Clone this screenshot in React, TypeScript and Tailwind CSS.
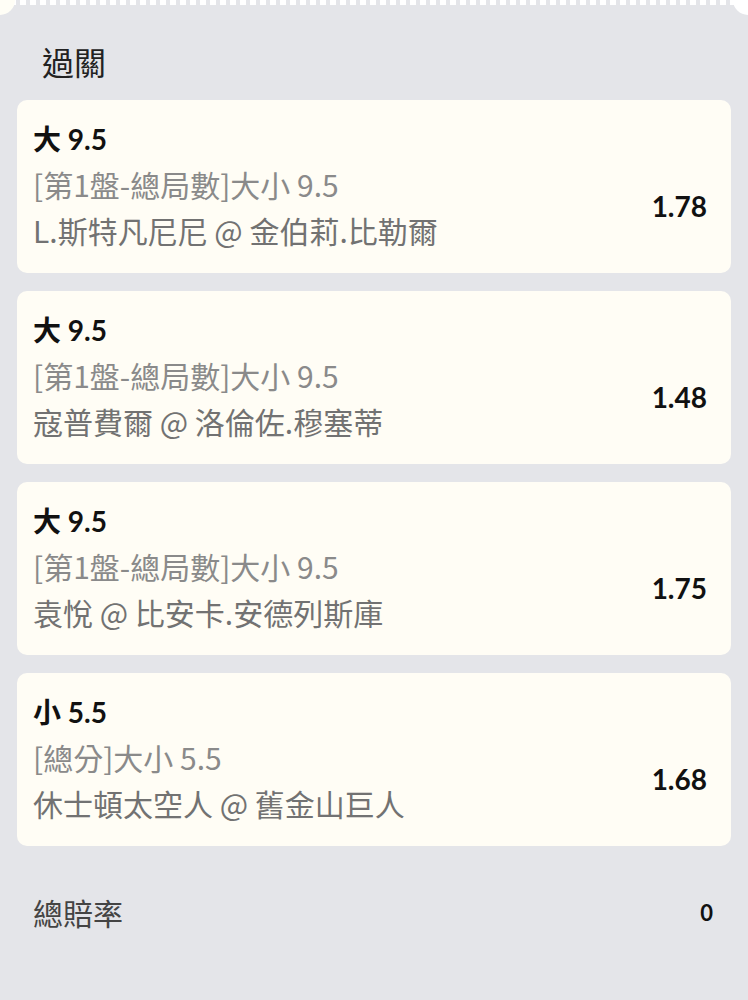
import React from 'react';

type Bet = { pick: string; market: string; match: string; odds: string };

const bets: Bet[] = [
  { pick: '大 9.5', market: '[第1盤-總局數]大小 9.5', match: 'L.斯特凡尼尼 @ 金伯莉.比勒爾', odds: '1.78' },
  { pick: '大 9.5', market: '[第1盤-總局數]大小 9.5', match: '寇普費爾 @ 洛倫佐.穆塞蒂', odds: '1.48' },
  { pick: '大 9.5', market: '[第1盤-總局數]大小 9.5', match: '袁悅 @ 比安卡.安德列斯庫', odds: '1.75' },
  { pick: '小 5.5', market: '[總分]大小 5.5', match: '休士頓太空人 @ 舊金山巨人', odds: '1.68' },
];

const latin = "font-['Lato','Noto_Sans_CJK_TC',sans-serif]";
const cjk = "font-['Noto_Sans_CJK_TC',sans-serif]";

function BetCard({ bet }: { bet: Bet }) {
  return (
    <div className="flex items-center justify-between rounded-[10px] bg-[#fffdf5] pl-4 pr-6 pt-[17px] pb-[20px]">
      <div className="flex flex-col">
        <p className={`${latin} text-[28px] leading-[44px] font-bold text-[#111]`}>{bet.pick}</p>
        <p className={`${cjk} text-[30px] leading-[46px] text-[#8a8a8a]`}>{bet.market}</p>
        <p className={`${cjk} text-[30px] leading-[46px] text-[#727272]`}>{bet.match}</p>
      </div>
      {/* odds sit level with the lower two lines */}
      <span className={`${latin} mt-[41px] text-[28px] font-bold text-[#111]`}>{bet.odds}</span>
    </div>
  );
}

export default function App() {
  return (
    <div className={`relative h-[1000px] w-[748px] overflow-hidden bg-[#e4e5e9] ${latin}`}>
      {/* perforated top edge */}
      <div className="h-[5px] w-full bg-[repeating-linear-gradient(90deg,#ffffff_0px,#ffffff_6px,transparent_6px,transparent_10px)]" />
      <div className="absolute -left-[15px] -top-[15px] h-[30px] w-[30px] rounded-full bg-[#fffef6]" />
      <div className="absolute -right-[15px] -top-[15px] h-[30px] w-[30px] rounded-full bg-[#ffffff]" />

      <h2 className={`${cjk} pl-[42px] pt-[36px] pb-[19px] text-[32px] leading-[40px] font-normal text-[#222]`}>過關</h2>

      <div className="flex flex-col gap-[18px] px-[17px]">
        {bets.map((bet, i) => (
          <BetCard key={i} bet={bet} />
        ))}
      </div>

      <div className="flex items-center justify-between pl-[33px] pr-[35px] pt-[46px]">
        <span className={`${cjk} text-[30px] leading-[40px] text-[#444]`}>總賠率</span>
        <span className="text-[22px] font-bold text-[#111]">0</span>
      </div>
    </div>
  );
}
